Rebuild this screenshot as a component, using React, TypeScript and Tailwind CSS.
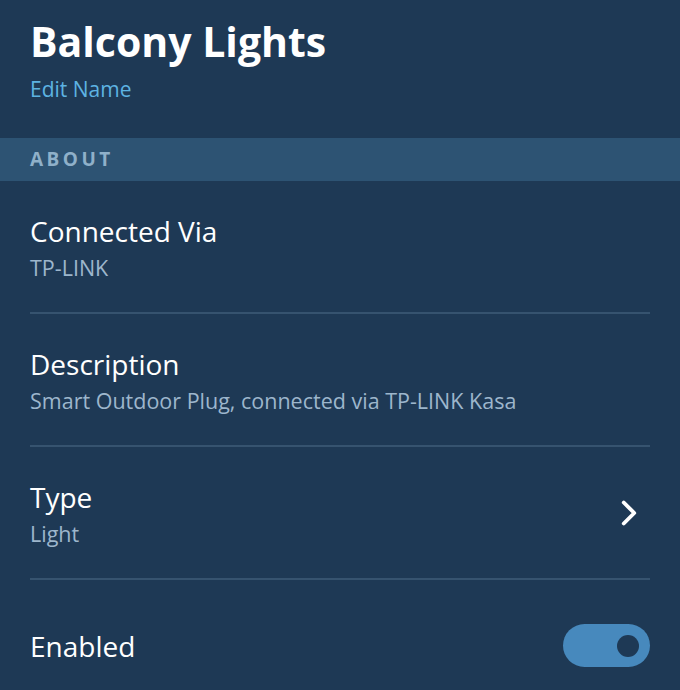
const Chevron = () => (
  <svg viewBox="0 0 24 24" className="w-[42px] h-[42px]" fill="none" stroke="white" strokeWidth={2.2} strokeLinecap="round" strokeLinejoin="round">
    <path d="m9 18 6-6-6-6" />
  </svg>
);

const Row = ({ title, sub, chevron }: { title: string; sub: string; chevron?: boolean }) => {
  return (
    <div className="flex items-center justify-between h-[133px] border-b-2 border-[#36536f]">
      <div className="flex flex-col pt-[3px]">
        <span className="text-[28px] leading-[34px] text-white">{title}</span>
        <span className="mt-[6px] text-[21.5px] leading-[28px] text-[#9db6cc]">{sub}</span>
      </div>
      {chevron && <Chevron />}
    </div>
  );
};

export default function App() {
  return (
    <div
      className="w-[680px] h-[690px] bg-[#1e3955] overflow-hidden"
      style={{ fontFamily: '"Open Sans", "Noto Sans", sans-serif' }}
    >
      {/* Header */}
      <div className="px-[30px] pt-[15px] h-[138px] flex flex-col items-start">
        <h1 className="text-[41px] leading-[52px] font-bold text-white">Balcony Lights</h1>
        <button className="mt-[8px] text-[21px] leading-[28px] text-[#5db3e2]">Edit Name</button>
      </div>

      {/* Section band */}
      <div className="h-[43px] bg-[#2d5373] px-[30px] flex items-center">
        <span className="text-[19px] font-bold tracking-[3.5px] text-[#8fb0c9]">ABOUT</span>
      </div>

      {/* Rows */}
      <div className="px-[30px]">
        <Row title="Connected Via" sub="TP-LINK" />
        <Row title="Description" sub="Smart Outdoor Plug, connected via TP-LINK Kasa" />
        <Row title="Type" sub="Light" chevron />
        <div className="flex items-center justify-between h-[131px]">
          <span className="text-[28px] leading-[34px] text-white">Enabled</span>
          <div className="w-[87px] h-[43px] rounded-full bg-[#4789bd] flex items-center justify-end pr-[11px]">
            <div className="w-[22px] h-[22px] rounded-full bg-[#1e3955]" />
          </div>
        </div>
      </div>
    </div>
  );
}
